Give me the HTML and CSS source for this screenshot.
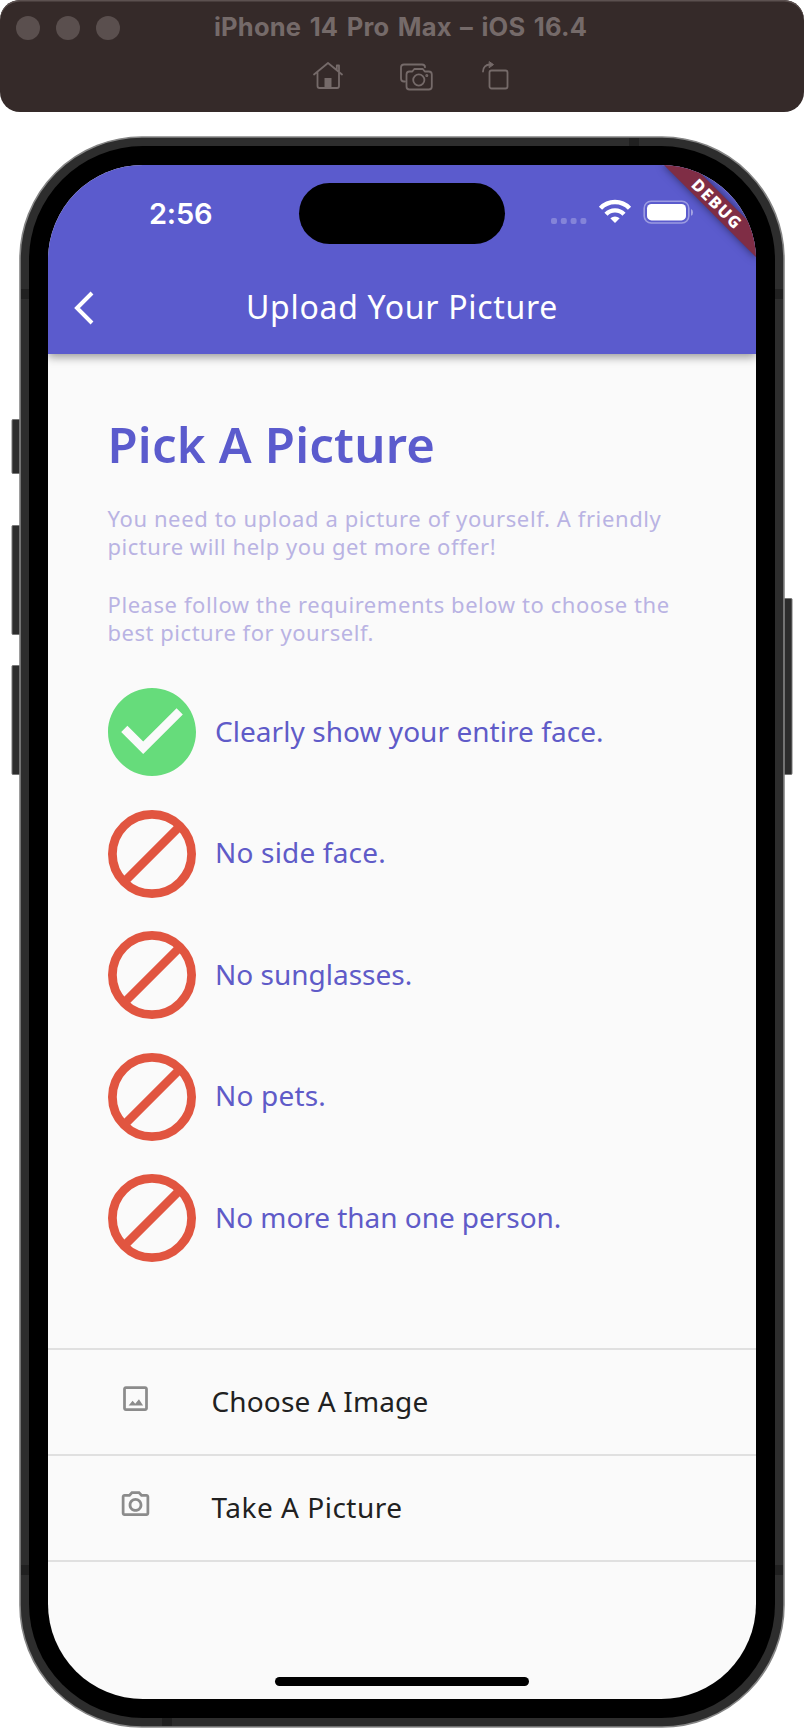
FILE: index.html
```html
<!DOCTYPE html>
<html lang="en">
<head>
<meta charset="utf-8">
<title>Upload Your Picture</title>
<link rel="stylesheet" href="styles.css">
</head>
<body>
<svg width="0" height="0" class="defs">
  <symbol id="ban" viewBox="0 0 88 88">
    <circle cx="44" cy="44" r="39.6" fill="none" stroke="#e15540" stroke-width="8.8"/>
    <path d="M16 72 72 16" stroke="#e15540" stroke-width="8.8"/>
  </symbol>
</svg>
<header class="toolbar">
  <div class="lights"><i></i><i></i><i></i></div>
  <h1 class="window-title">iPhone 14 Pro Max – iOS 16.4</h1>
  <div class="tools">
    <svg width="32" height="30" viewBox="0 0 32 30" fill="none" stroke="#756a69" stroke-width="1.8" stroke-linecap="round" stroke-linejoin="round">
      <path d="M2 13.500 16 2 30 13.500M5.500 11.500V25q0 2 2 2h17.500q2 0 2-2V4.500h-2.200v4"/>
      <path d="M12.500 27V17h7v10z" fill="#756a69" stroke="none"/>
    </svg>
    <svg width="34" height="30" viewBox="0 0 34 30" fill="none" stroke="#756a69" stroke-width="1.8" stroke-linecap="round" stroke-linejoin="round">
      <path d="M5 20.500H4q-3 0-3-3V6.500q0-3 3-3h18q3 0 3 2.800"/>
      <path d="M9.500 10.500h2.800l2-2.500h8.500l2 2.500h4q3 0 3 3v12q0 3-3 3H9.500q-3 0-3-3v-12q0-3 3-3z"/>
      <circle cx="18.800" cy="19" r="5.600"/><circle cx="26.800" cy="14.500" r=".6"/>
    </svg>
    <svg width="30" height="30" viewBox="0 0 30 30" fill="none" stroke="#756a69" stroke-width="1.800" stroke-linecap="round" stroke-linejoin="round">
      <rect x="8.500" y="9.500" width="18" height="18" rx="2"/>
      <path d="M2 10.500C2 6 5 3.500 9 3.500"/><path d="M8.500.8 12.500 3.600 8.500 6.500z" fill="#756a69" stroke-width="1"/>
    </svg>
  </div>
</header>

<main class="device">
  <svg class="frame" width="804" height="1620" viewBox="0 112 804 1620">
    <g fill="#2d2d2d" stroke="#777" stroke-width="1">
      <rect x="12" y="419.500" width="12" height="54" rx="1"/>
      <rect x="12" y="525.500" width="12" height="109" rx="1"/>
      <rect x="12" y="665.500" width="12" height="109" rx="1"/>
      <rect x="780" y="598.500" width="12" height="176" rx="1"/>
    </g>
    <rect x="20" y="137" width="764" height="1590" rx="122" fill="#2d2d2d" stroke="#858585" stroke-width="1.600"/>
    <path fill="#202020" d="M21 289h10v10H21zM773 289h10v10H773zM21 1565h10v10H21zM773 1565h10v10H773zM629 138h10v10H629zM162 1716h10v10H162z"/>
    <rect x="29" y="146" width="746" height="1572" rx="114"/>
  </svg>

  <section class="screen">
    <div class="appbar">
      <div class="status">
        <time>2:56</time>
        <div class="island"></div>
        <svg width="142" height="26" viewBox="0 0 142 26">
          <g fill="#fff" opacity=".25"><rect x="0" y="19" width="6" height="6" rx="2"/><rect x="9.800" y="19" width="6" height="6" rx="2"/><rect x="19.600" y="19" width="6" height="6" rx="2"/><rect x="29.400" y="19" width="6" height="6" rx="2"/></g>
          <g fill="none" stroke="#fff" stroke-width="4.400"><path d="M49.500 9.200A20 20 0 0 1 78.500 9.200"/><path d="M55 15.200A12.500 12.500 0 0 1 73 15.200"/></g>
          <path fill="#fff" d="M59.300 19.200Q64 15.600 68.700 19.200L64 24z"/>
          <rect x="93.200" y="2.200" width="44.600" height="21.800" rx="7" fill="none" stroke="#fff" stroke-opacity=".4" stroke-width="1.600"/>
          <rect x="96" y="5" width="39" height="16.400" rx="4.500" fill="#fff"/>
          <path d="M140 10v6.800q2-.8 2-3.400t-2-3.400z" fill="#fff" opacity=".45"/>
        </svg>
      </div>
      <div class="nav">
        <svg width="22" height="34" viewBox="0 0 22 34"><path d="M20 2 5 17 20 32" fill="none" stroke="#fff" stroke-width="4"/></svg>
        <h2>Upload Your Picture</h2>
      </div>
      <div class="debug">DEBUG</div>
    </div>

    <div class="content">
      <h3>Pick A Picture</h3>
      <p><span class="wide">You need to upload a picture of yourself. A friendly</span><br>picture will help you get more offer!</p>
      <p><span class="mid">Please follow the requirements below to choose the</span><br>best picture for yourself.</p>
      <ul class="rules">
        <li><svg viewBox="2 2 20 20"><path fill="#66dc7b" d="M12 2C6.480 2 2 6.480 2 12s4.480 10 10 10 10-4.480 10-10S17.520 2 12 2zm-2 15-5-5 1.410-1.410L10 14.170l7.590-7.590L19 8l-9 9z"/></svg><span>Clearly show your entire face.</span></li>
        <li><svg><use href="#ban"/></svg><span>No side face.</span></li>
        <li><svg><use href="#ban"/></svg><span>No sunglasses.</span></li>
        <li><svg><use href="#ban"/></svg><span>No pets.</span></li>
        <li><svg><use href="#ban"/></svg><span>No more than one person.</span></li>
      </ul>
    </div>

    <div class="actions">
      <div class="action">
        <svg viewBox="0 0 24 24" fill="#8b8b8b"><path d="M19 5v14H5V5h14m0-2H5c-1.100 0-2 .9-2 2v14c0 1.100.9 2 2 2h14c1.100 0 2-.9 2-2V5c0-1.100-.9-2-2-2zm-4.500 9.500-2.700 3.300-1.900-2.100L7 17h10.500z"/></svg>
        <span>Choose A Image</span>
      </div>
      <div class="action take">
        <svg viewBox="0 0 24 24" fill="#8b8b8b"><path d="M20 5h-3.170L15 3H9L7.170 5H4c-1.100 0-2 .9-2 2v12c0 1.100.9 2 2 2h16c1.100 0 2-.9 2-2V7c0-1.100-.9-2-2-2zm0 14H4V7h4.050l1.830-2h4.240l1.830 2H20v12zM12 8c-2.760 0-5 2.240-5 5s2.240 5 5 5 5-2.240 5-5-2.240-5-5-5zm0 8c-1.650 0-3-1.350-3-3s1.350-3 3-3 3 1.350 3 3-1.350 3-3 3z"/></svg>
        <span>Take A Picture</span>
      </div>
    </div>
    <div class="home-bar"></div>
  </section>
</main>
</body>
</html>
```
FILE: styles.css
```css
* { box-sizing: border-box; margin: 0; padding: 0; }
body { width: 804px; height: 1732px; background: #fff; overflow: hidden; font-family: "Noto Sans", sans-serif; }
svg { display: block; flex: none; }
.defs { position: absolute; }

.toolbar { height: 112px; background: #352a29; border-radius: 20px; box-shadow: inset 0 1.500px 0 #5c5150; display: grid; grid-template-columns: 804px; grid-template-rows: 56px 56px; }
.lights { grid-area: 1 / 1; display: flex; gap: 16px; padding: 16px; }
.lights i { width: 24px; height: 24px; border-radius: 50%; background: #5a4f4e; }
.window-title { grid-area: 1 / 1; padding-left: 214px; font: 700 25.500px/54px Inter, sans-serif; letter-spacing: .2px; word-spacing: 2.200px; color: #756a69; white-space: nowrap; }
.tools { padding: 5px 0 0 312px; display: flex; }
.tools svg + svg { margin-left: 56px; }
.tools svg:last-child { margin-left: 47px; }

.device { position: relative; height: 1620px; padding: 53px 48px 33px; }
.frame { position: absolute; left: 0; top: 0; }
.screen { position: relative; width: 708px; height: 1534px; background: #fafafa; display: flex; flex-direction: column; border-radius: 95px; overflow: hidden; }

.appbar { position: relative; height: 189px; background: #5b5bcd; color: #fff; box-shadow: 0 3px 9px rgba(0,0,0,.4); flex: none; }
.status { height: 96px; padding-top: 18px; display: flex; }
.status time { width: 251px; padding-left: 101px; font: 600 29px/61px Inter, sans-serif; letter-spacing: -.2px; }
.island { width: 206px; height: 61px; border-radius: 31px; background: #000; }
.status svg { margin: 16px 0 0 46px; }
.nav { height: 93px; display: flex; align-items: flex-start; padding: 30px 0 0 24px; }
.nav h2 { font-weight: 400; font-size: 32px; line-height: 32px; letter-spacing: .7px; margin-left: 152px; white-space: nowrap; }
.debug { position: absolute; left: 604px; top: 29px; width: 130px; height: 20px; transform: rotate(45deg); background: #7f2d45; text-align: center; font: 800 16.500px/20px "Noto Sans", sans-serif; letter-spacing: 1.300px; box-shadow: 0 0 9px rgba(0,0,0,.5); }

.content { padding: 64px 0 0 59.500px; color: #5f5bc8; height: 994px; flex: none; white-space: nowrap; }
.content h3 { font-size: 49px; line-height: 52px; font-weight: 600; letter-spacing: .22px; color: #5b5bcd; }
.content p { margin-top: 30px; font-size: 22px; line-height: 28px; letter-spacing: .53px; color: #b9b3e3; }
.content .wide { letter-spacing: .61px; }
.content .mid { letter-spacing: .57px; }
.content h3 + p { margin-top: 34px; }
.rules { list-style: none; margin-top: 42px; display: grid; gap: 33.500px; }
.rules li { height: 88px; display: flex; align-items: center; font-size: 28px; line-height: 40px; }
.rules span { padding-bottom: 3px; }
.rules svg { width: 88px; height: 88px; margin-right: 19.500px; }
.rules li:first-child span { letter-spacing: .05px; }
.rules li:nth-child(2) span, .rules li:nth-child(4) span { letter-spacing: .18px; }
.rules li:last-child span { letter-spacing: -.05px; }

.actions { border-top: 2px solid #e0e0e0; }
.action { height: 106px; border-bottom: 2px solid #e0e0e0; display: flex; padding-left: 71px; color: #212121; font-size: 28px; line-height: 102px; letter-spacing: .14px; white-space: nowrap; }
.action svg { width: 33px; height: 33px; margin: 32px 59.500px 0 0; }
.action.take { letter-spacing: .5px; }
.action.take svg { margin-top: 31px; }
.home-bar { width: 254px; height: 9px; border-radius: 5px; background: #000; margin: auto auto 13px 227px; }
```
